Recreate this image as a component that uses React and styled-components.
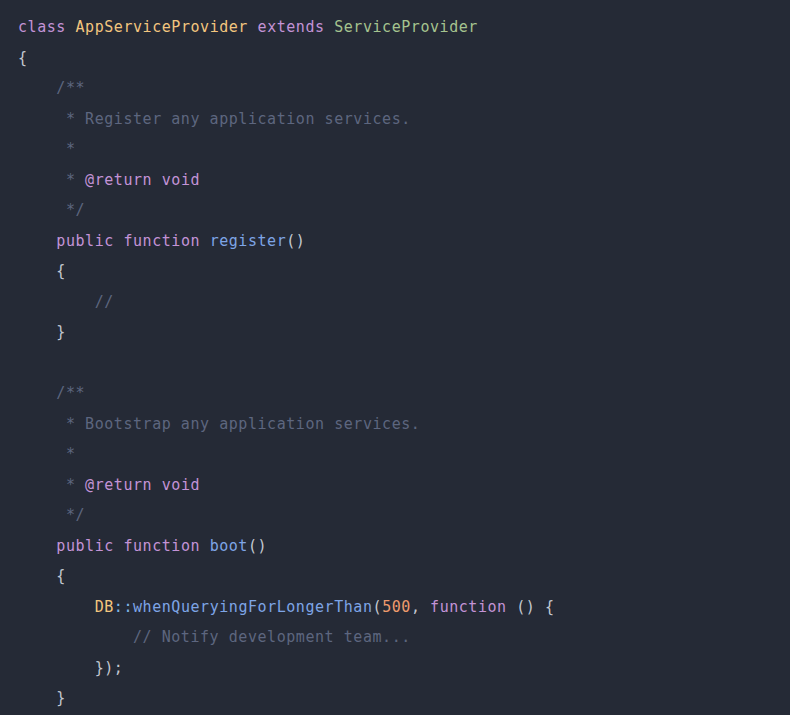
import React from "react";
import styled, { createGlobalStyle } from "styled-components";

const GlobalStyle = createGlobalStyle`
    html, body {
        margin: 0;
        padding: 0;
        background: #252a36;
    }
`;

const colors = {
    keyword: "#c393d6",
    className: "#f3c67f",
    parent: "#a5c48f",
    method: "#7ea5e6",
    number: "#ee9a6c",
    comment: "#5d667f",
    tag: "#c393d6",
    plain: "#c3c8d1",
    static: "#f3c67f",
    op: "#7eb6e6",
};

const code = [
    [["keyword", "class "], ["className", "AppServiceProvider "], ["keyword", "extends "], ["parent", "ServiceProvider"]],
    [["plain", "{"]],
    [["comment", "    /**"]],
    [["comment", "     * Register any application services."]],
    [["comment", "     *"]],
    [["comment", "     * "], ["tag", "@return void"]],
    [["comment", "     */"]],
    [["plain", "    "], ["keyword", "public function "], ["method", "register"], ["plain", "()"]],
    [["plain", "    {"]],
    [["comment", "        //"]],
    [["plain", "    }"]],
    [],
    [["comment", "    /**"]],
    [["comment", "     * Bootstrap any application services."]],
    [["comment", "     *"]],
    [["comment", "     * "], ["tag", "@return void"]],
    [["comment", "     */"]],
    [["plain", "    "], ["keyword", "public function "], ["method", "boot"], ["plain", "()"]],
    [["plain", "    {"]],
    [
        ["plain", "        "],
        ["static", "DB"],
        ["op", "::"],
        ["method", "whenQueryingForLongerThan"],
        ["plain", "("],
        ["number", "500"],
        ["plain", ", "],
        ["keyword", "function "],
        ["plain", "() {"],
    ],
    [["comment", "            // Notify development team..."]],
    [["plain", "        });"]],
    [["plain", "    }"]],
];

const App = () => {
    return (
        <>
            <GlobalStyle />
            <CodeBlock>
                {code.map((tokens, i) => (
                    <Line key={i}>
                        {tokens.length === 0
                            ? " "
                            : tokens.map(([kind, text], j) => (
                                  <Token key={j} $kind={kind}>
                                      {text}
                                  </Token>
                              ))}
                    </Line>
                ))}
            </CodeBlock>
        </>
    );
};

export default App;

const CodeBlock = styled.pre`
    margin: 0;
    width: 790px;
    height: 715px;
    box-sizing: border-box;
    padding: 12px 18px 0;
    overflow: hidden;
    background: #252a36;
    font-family: "DejaVu Sans Mono", "Liberation Mono", monospace;
    font-size: 15px;
    letter-spacing: 0.55px;
    color: ${colors.plain};
`;

const Line = styled.div`
    height: 30.5px;
    line-height: 30.5px;
    white-space: pre;
`;

const Token = styled.span`
    color: ${({ $kind }) => colors[$kind] || colors.plain};
`;
